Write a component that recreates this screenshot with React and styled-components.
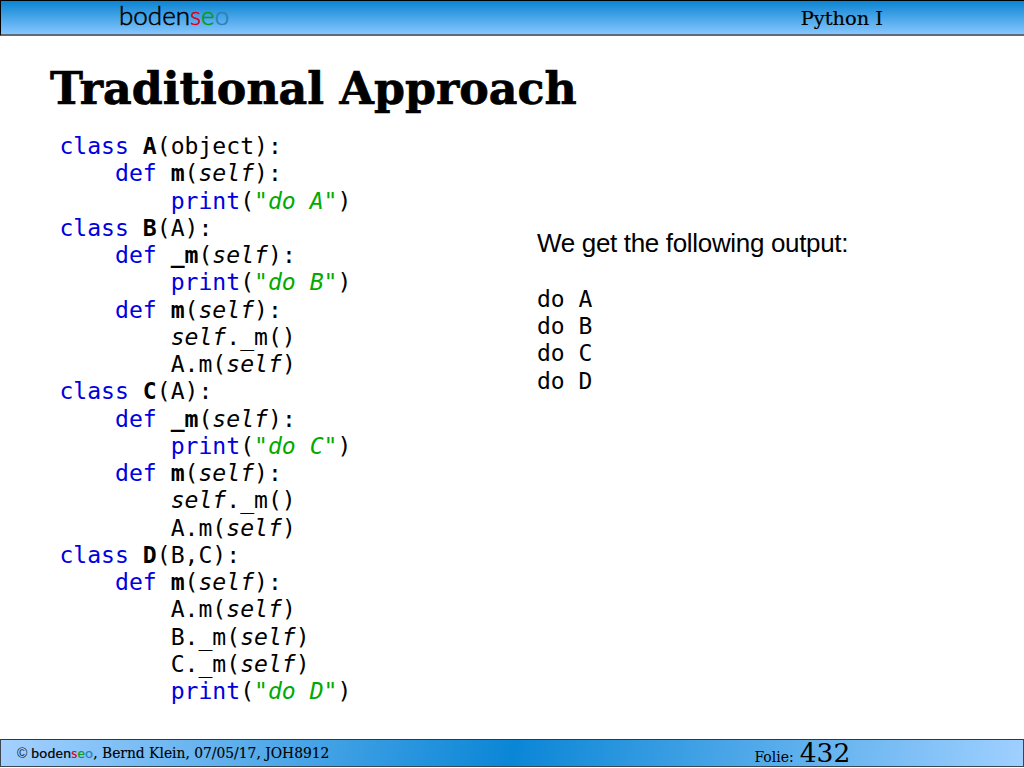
import React from "react";
import styled, { createGlobalStyle } from "styled-components";

const Global = createGlobalStyle`
  html, body { margin: 0; padding: 0; background: #fff; }
  #root { width: 1024px; height: 768px; overflow: hidden; }
`;

const Slide = styled.div`
  width: 1024px;
  height: 768px;
  display: flex;
  flex-direction: column;
  background: #fff;
`;

const Header = styled.header`
  box-sizing: border-box;
  height: 36px;
  display: flex;
  align-items: center;
  justify-content: space-between;
  padding: 0 141px 0 118px;
  background: linear-gradient(180deg, #0b84d2 0%, #85c6ff 100%);
  border: 1px solid #000;
  border-bottom: 2px solid #5f6b76;
  border-right: none;
`;

const Logo = styled.span`
  font-family: "Lato", "Noto Sans", sans-serif;
  font-size: ${(p) => p.$size}px;
  font-weight: ${(p) => p.$weight};
  line-height: 1;
  letter-spacing: ${(p) => p.$spacing}px;
  margin-top: ${(p) => p.$lift}px;
  -webkit-text-stroke: ${(p) => p.$stroke}px currentColor;
  color: #000;
`;

const Letter = styled.span`
  color: ${(p) => p.$color};
`;

const Course = styled.span`
  font-family: "DejaVu Serif", serif;
  font-size: 19.4px;
  margin-top: 2px;
  -webkit-text-stroke: 0.2px #000;
  color: #000;
`;

const Main = styled.main`
  flex: 1;
  min-height: 0;
  display: flex;
  flex-direction: column;
  padding: 24px 0 0 50px;
`;

const Title = styled.h1`
  margin: 0;
  font-family: "DejaVu Serif", serif;
  font-weight: 700;
  font-size: 44.3px;
  line-height: 56px;
  -webkit-text-stroke: 0.7px #000;
  color: #000;
`;

const Columns = styled.div`
  display: flex;
  padding: 17px 0 0 9.4px;
`;

const Code = styled.pre`
  margin: 0;
  width: 477.6px;
  flex: none;
  font-family: "DejaVu Sans Mono", monospace;
  font-size: 23.1px;
  line-height: 27.25px;
  color: #000;
`;

const Kw = styled.span`color: #0000e0;`;
const Name = styled.b`font-weight: 700;`;
const Self = styled.i`font-style: italic;`;
const Str = styled.i`font-style: italic; color: #00aa00;`;
const Q = styled.span`color: #00aa00;`;

const Side = styled.div`
  padding-top: 93px;
`;

const Lead = styled.p`
  margin: 0 0 25.8px;
  font-family: "Liberation Sans", Arial, sans-serif;
  font-size: 26px;
  line-height: 34px;
  letter-spacing: -0.33px;
  color: #000;
`;

const Output = styled.pre`
  margin: 0;
  font-family: "DejaVu Sans Mono", monospace;
  font-size: 23px;
  line-height: 27.25px;
  color: #000;
`;

const Footer = styled.footer`
  box-sizing: border-box;
  height: 28px;
  margin-bottom: 1px;
  display: flex;
  align-items: center;
  padding: 0 0 0 16px;
  background: linear-gradient(100deg, #a4d1ff 0%, #0a86d6 50%, #a0d0ff 100%);
  border: 1px solid #3c4650;
  border-top: 1px solid #2c3844;
`;

const FootText = styled.span`
  font-family: "DejaVu Serif", serif;
  font-size: 13.85px;
  -webkit-text-stroke: 0.15px #000;
  color: #000;
  white-space: nowrap;
`;

const Copy = styled.span`
  font-family: "Liberation Sans", sans-serif;
  font-size: 14px;
  color: #222;
  margin-right: 4px;
`;

const Folie = styled.span`
  margin-left: 425px;
  display: flex;
  align-items: baseline;
  gap: 6px;
  font-family: "DejaVu Serif", serif;
  font-size: 14px;
  color: #000;
`;

const FolieNum = styled.span`
  font-size: 26.5px;
  line-height: 24px;
`;

const S = ({ c = "self" }) => <Self>{c}</Self>;
const P = (t) => (
  <>
    <Kw>print</Kw>(<Q>"</Q><Str>{t}</Str><Q>"</Q>)
  </>
);

const Brand = ({ size, spacing, lift, stroke, weight }) => (
  <Logo $size={size} $spacing={spacing} $lift={lift} $stroke={stroke} $weight={weight}>
    boden<Letter $color="#e0001a">s</Letter>
    <Letter $color="#0a9a1a">e</Letter>
    <Letter $color="#2a80b8">o</Letter>
  </Logo>
);

export default function App() {
  return (
    <Slide>
      <Global />
      <Header>
        <Brand size={26} spacing={0} lift={-6} stroke={0.55} weight={300} />
        <Course>Python I</Course>
      </Header>
      <Main>
        <Title>Traditional Approach</Title>
        <Columns>
          <Code>
            <Kw>class</Kw> <Name>A</Name>(object):{"\n"}
            {"    "}<Kw>def</Kw> <Name>m</Name>(<S />):{"\n"}
            {"        "}{P("do A")}{"\n"}
            <Kw>class</Kw> <Name>B</Name>(A):{"\n"}
            {"    "}<Kw>def</Kw> <Name>_m</Name>(<S />):{"\n"}
            {"        "}{P("do B")}{"\n"}
            {"    "}<Kw>def</Kw> <Name>m</Name>(<S />):{"\n"}
            {"        "}<S />._m(){"\n"}
            {"        "}A.m(<S />){"\n"}
            <Kw>class</Kw> <Name>C</Name>(A):{"\n"}
            {"    "}<Kw>def</Kw> <Name>_m</Name>(<S />):{"\n"}
            {"        "}{P("do C")}{"\n"}
            {"    "}<Kw>def</Kw> <Name>m</Name>(<S />):{"\n"}
            {"        "}<S />._m(){"\n"}
            {"        "}A.m(<S />){"\n"}
            <Kw>class</Kw> <Name>D</Name>(B,C):{"\n"}
            {"    "}<Kw>def</Kw> <Name>m</Name>(<S />):{"\n"}
            {"        "}A.m(<S />){"\n"}
            {"        "}B._m(<S />){"\n"}
            {"        "}C._m(<S />){"\n"}
            {"        "}{P("do D")}
          </Code>
          <Side>
            <Lead>We get the following output:</Lead>
            <Output>{"do A\ndo B\ndo C\ndo D"}</Output>
          </Side>
        </Columns>
      </Main>
      <Footer>
        <Copy>©</Copy>
        <Brand size={14} spacing={0.2} lift={0} stroke={0.2} weight={400} />
        <FootText>, Bernd Klein, 07/05/17, JOH8912</FootText>
        <Folie>
          Folie: <FolieNum>432</FolieNum>
        </Folie>
      </Footer>
    </Slide>
  );
}
